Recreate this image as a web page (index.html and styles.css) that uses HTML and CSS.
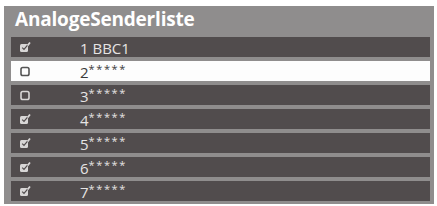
FILE: index.html
```
<!DOCTYPE html>
<html lang="de">
<head>
    <meta charset="utf-8">
    <title>AnalogeSenderliste</title>
    <link rel="stylesheet" href="styles.css">
</head>
<body>
    <div class="panel">
        <div class="title">AnalogeSenderliste</div>
        <div class="list">
            <div class="row">
                <span class="box"><svg viewBox="0 0 12 12"><rect x="1" y="3" width="8" height="8" rx="1.5" fill="#d8d6d6"/><path d="M3 6.5 L5 9 L11 1.5" stroke="#d8d6d6" stroke-width="1.8" fill="none"/><path d="M3.2 6.6 L5 8.4 L8.4 4.4" stroke="#514c4d" stroke-width="1.2" fill="none"/></svg></span>
                <span class="name">1 BBC1</span>
            </div>
            <div class="row sel">
                <span class="box"><svg viewBox="0 0 12 12"><rect x="2" y="2.5" width="8" height="8" rx="1.8" fill="none" stroke="#555" stroke-width="1.6"/></svg></span>
                <span class="name">2<sup>*****</sup></span>
            </div>
            <div class="row">
                <span class="box"><svg viewBox="0 0 12 12"><rect x="2" y="2.5" width="8" height="8" rx="1.8" fill="none" stroke="#d8d6d6" stroke-width="1.6"/></svg></span>
                <span class="name">3<sup>*****</sup></span>
            </div>
            <div class="row">
                <span class="box"><svg viewBox="0 0 12 12"><rect x="1" y="3" width="8" height="8" rx="1.5" fill="#d8d6d6"/><path d="M3 6.5 L5 9 L11 1.5" stroke="#d8d6d6" stroke-width="1.8" fill="none"/><path d="M3.2 6.6 L5 8.4 L8.4 4.4" stroke="#514c4d" stroke-width="1.2" fill="none"/></svg></span>
                <span class="name">4<sup>*****</sup></span>
            </div>
            <div class="row">
                <span class="box"><svg viewBox="0 0 12 12"><rect x="1" y="3" width="8" height="8" rx="1.5" fill="#d8d6d6"/><path d="M3 6.5 L5 9 L11 1.5" stroke="#d8d6d6" stroke-width="1.8" fill="none"/><path d="M3.2 6.6 L5 8.4 L8.4 4.4" stroke="#514c4d" stroke-width="1.2" fill="none"/></svg></span>
                <span class="name">5<sup>*****</sup></span>
            </div>
            <div class="row">
                <span class="box"><svg viewBox="0 0 12 12"><rect x="1" y="3" width="8" height="8" rx="1.5" fill="#d8d6d6"/><path d="M3 6.5 L5 9 L11 1.5" stroke="#d8d6d6" stroke-width="1.8" fill="none"/><path d="M3.2 6.6 L5 8.4 L8.4 4.4" stroke="#514c4d" stroke-width="1.2" fill="none"/></svg></span>
                <span class="name">6<sup>*****</sup></span>
            </div>
            <div class="row">
                <span class="box"><svg viewBox="0 0 12 12"><rect x="1" y="3" width="8" height="8" rx="1.5" fill="#d8d6d6"/><path d="M3 6.5 L5 9 L11 1.5" stroke="#d8d6d6" stroke-width="1.8" fill="none"/><path d="M3.2 6.6 L5 8.4 L8.4 4.4" stroke="#514c4d" stroke-width="1.2" fill="none"/></svg></span>
                <span class="name">7<sup>*****</sup></span>
            </div>
        </div>
    </div>
</body>
</html>
```
FILE: styles.css
```
body {
    margin: 0;
    background-color: #ffffff;
    font-family: "Open Sans", "DejaVu Sans", sans-serif;
}
.panel {
    margin: 6px 0 0 4px;
    width: 430px;
    height: 198px;
    background-color: #8f8d8d;
    box-sizing: border-box;
    padding: 0 4px 0 7px;
}
.title {
    height: 31px;
    line-height: 27px;
    padding-left: 4px;
    color: #ffffff;
    font-size: 19px;
    font-weight: bold;
    letter-spacing: -0.2px;
}
.list {
    display: flex;
    flex-direction: column;
    gap: 4px;
}
.row {
    height: 20px;
    display: flex;
    align-items: center;
    background-color: #514c4d;
    color: #e6e4e4;
    font-size: 15px;
}
.row.sel {
    background-color: #fdfdfd;
    color: #3a3a3a;
}
.box {
    width: 12px;
    height: 12px;
    margin-left: 8px;
    display: flex;
}
.box svg {
    width: 12px;
    height: 12px;
}
.name {
    margin-left: 49px;
    line-height: 20px;
    padding-top: 2px;
}
.name sup {
    font-size: 11px;
    vertical-align: 5px;
    line-height: 0;
    letter-spacing: 1.6px;
}
```
